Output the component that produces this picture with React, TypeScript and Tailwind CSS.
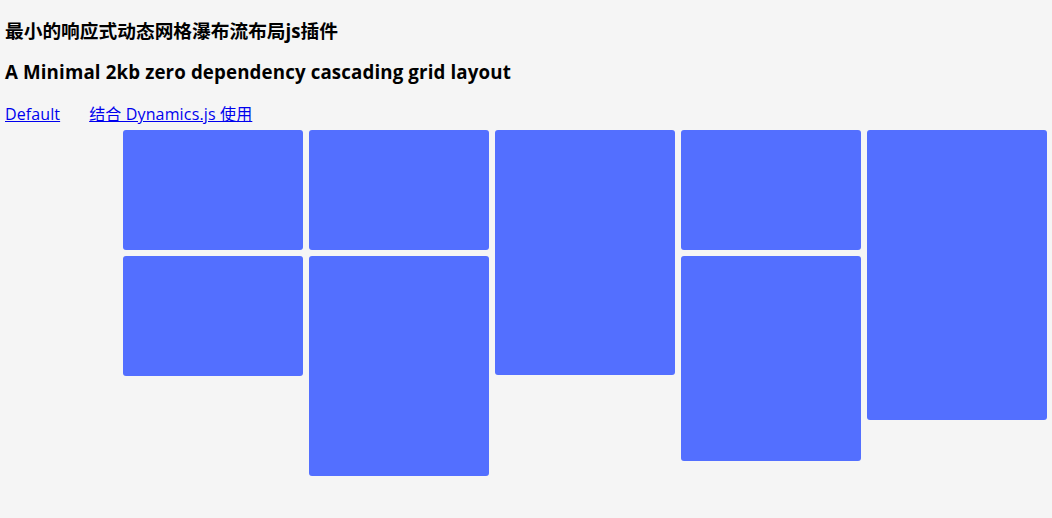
const columns: number[][] = [
  [120, 120],
  [120, 220],
  [245],
  [120, 205],
  [290],
];

export default function App() {
  return (
    <div
      className="min-h-[518px] bg-[#f5f5f5] px-[5px] text-black"
      style={{ fontFamily: '"Open Sans", "Noto Sans CJK SC", sans-serif' }}
    >
      <h3 className="pt-[18px] text-[18.72px] font-bold leading-[26px]">
        最小的响应式动态网格瀑布流布局js插件
      </h3>
      <h3 className="mt-[15px] text-[18.72px] font-bold leading-[26px] tracking-[0.13px]">
        A Minimal 2kb zero dependency cascading grid layout
      </h3>
      <div className="mt-[19px] flex text-[16px] leading-[20px]">
        <a href="#" className="mr-[29px] text-[#0000ee] underline tracking-[0.1px]">
          Default
        </a>
        <a href="#" className="text-[#0000ee] underline tracking-[0.15px]">
          结合 Dynamics.js 使用
        </a>
      </div>
      <div className="mt-[6px] flex justify-end gap-[6px]">
        {columns.map((col, i) => (
          <div key={i} className="flex w-[180px] flex-col gap-[6px]">
            {col.map((h, j) => (
              <div
                key={j}
                className="w-[180px] rounded-[3px] bg-[#536fff]"
                style={{ height: h }}
              />
            ))}
          </div>
        ))}
      </div>
    </div>
  );
}
